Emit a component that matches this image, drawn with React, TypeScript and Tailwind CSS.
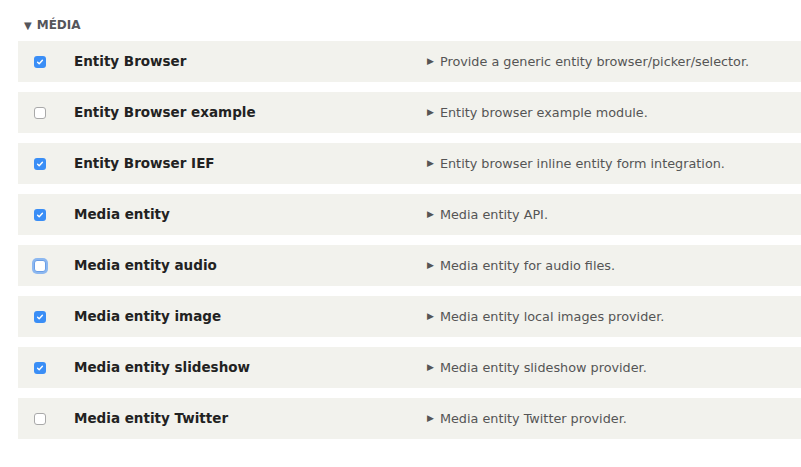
const modules = [
  { name: "Entity Browser", desc: "Provide a generic entity browser/picker/selector.", checked: true },
  { name: "Entity Browser example", desc: "Entity browser example module.", checked: false },
  { name: "Entity Browser IEF", desc: "Entity browser inline entity form integration.", checked: true },
  { name: "Media entity", desc: "Media entity API.", checked: true },
  { name: "Media entity audio", desc: "Media entity for audio files.", checked: false, focused: true },
  { name: "Media entity image", desc: "Media entity local images provider.", checked: true },
  { name: "Media entity slideshow", desc: "Media entity slideshow provider.", checked: true },
  { name: "Media entity Twitter", desc: "Media entity Twitter provider.", checked: false },
];

function Checkbox({ checked, focused }: { checked: boolean; focused?: boolean }) {
  if (checked) {
    return (
      <span className="flex h-[12px] w-[12px] items-center justify-center rounded-[3px] bg-[#3a8ef6]">
        <svg width="8" height="8" viewBox="0 0 8 8" fill="none">
          <path d="M1.6 4.2 3.2 5.8 6.4 2.2" stroke="#fff" strokeWidth="1.4" strokeLinecap="round" strokeLinejoin="round" />
        </svg>
      </span>
    );
  }
  return (
    <span
      className={`block h-[12px] w-[12px] rounded-[3px] border bg-white ${
        focused ? "border-[#6a9ee6] shadow-[0_0_0_2px_#8db8f0]" : "border-[#a9a9a9]"
      }`}
    />
  );
}

export default function App() {
  return (
    <div className="min-h-[467px] bg-white pl-[18px] pt-[17px] font-['DejaVu_Sans',sans-serif]">
      <div className="flex h-[16px] items-center gap-[5px] pl-[6px] text-[12px] font-bold uppercase text-[#55565b]">
        <span className="text-[10px]">▼</span>
        <span>Média</span>
      </div>
      <div className="mt-[8px] flex flex-col gap-[10px]">
        {modules.map((m) => (
          <div key={m.name} className="flex h-[41px] items-center bg-[#f2f2ed]">
            <div className="flex w-[56px] items-center justify-center pr-[12px]">
              <Checkbox checked={m.checked} focused={m.focused} />
            </div>
            <div className="w-[353px] text-[13.5px] font-bold text-[#222]">{m.name}</div>
            <div className="flex items-center gap-[6px] text-[12.8px] text-[#555]">
              <span className="text-[9px] text-[#555]">▶</span>
              <span>{m.desc}</span>
            </div>
          </div>
        ))}
      </div>
    </div>
  );
}
